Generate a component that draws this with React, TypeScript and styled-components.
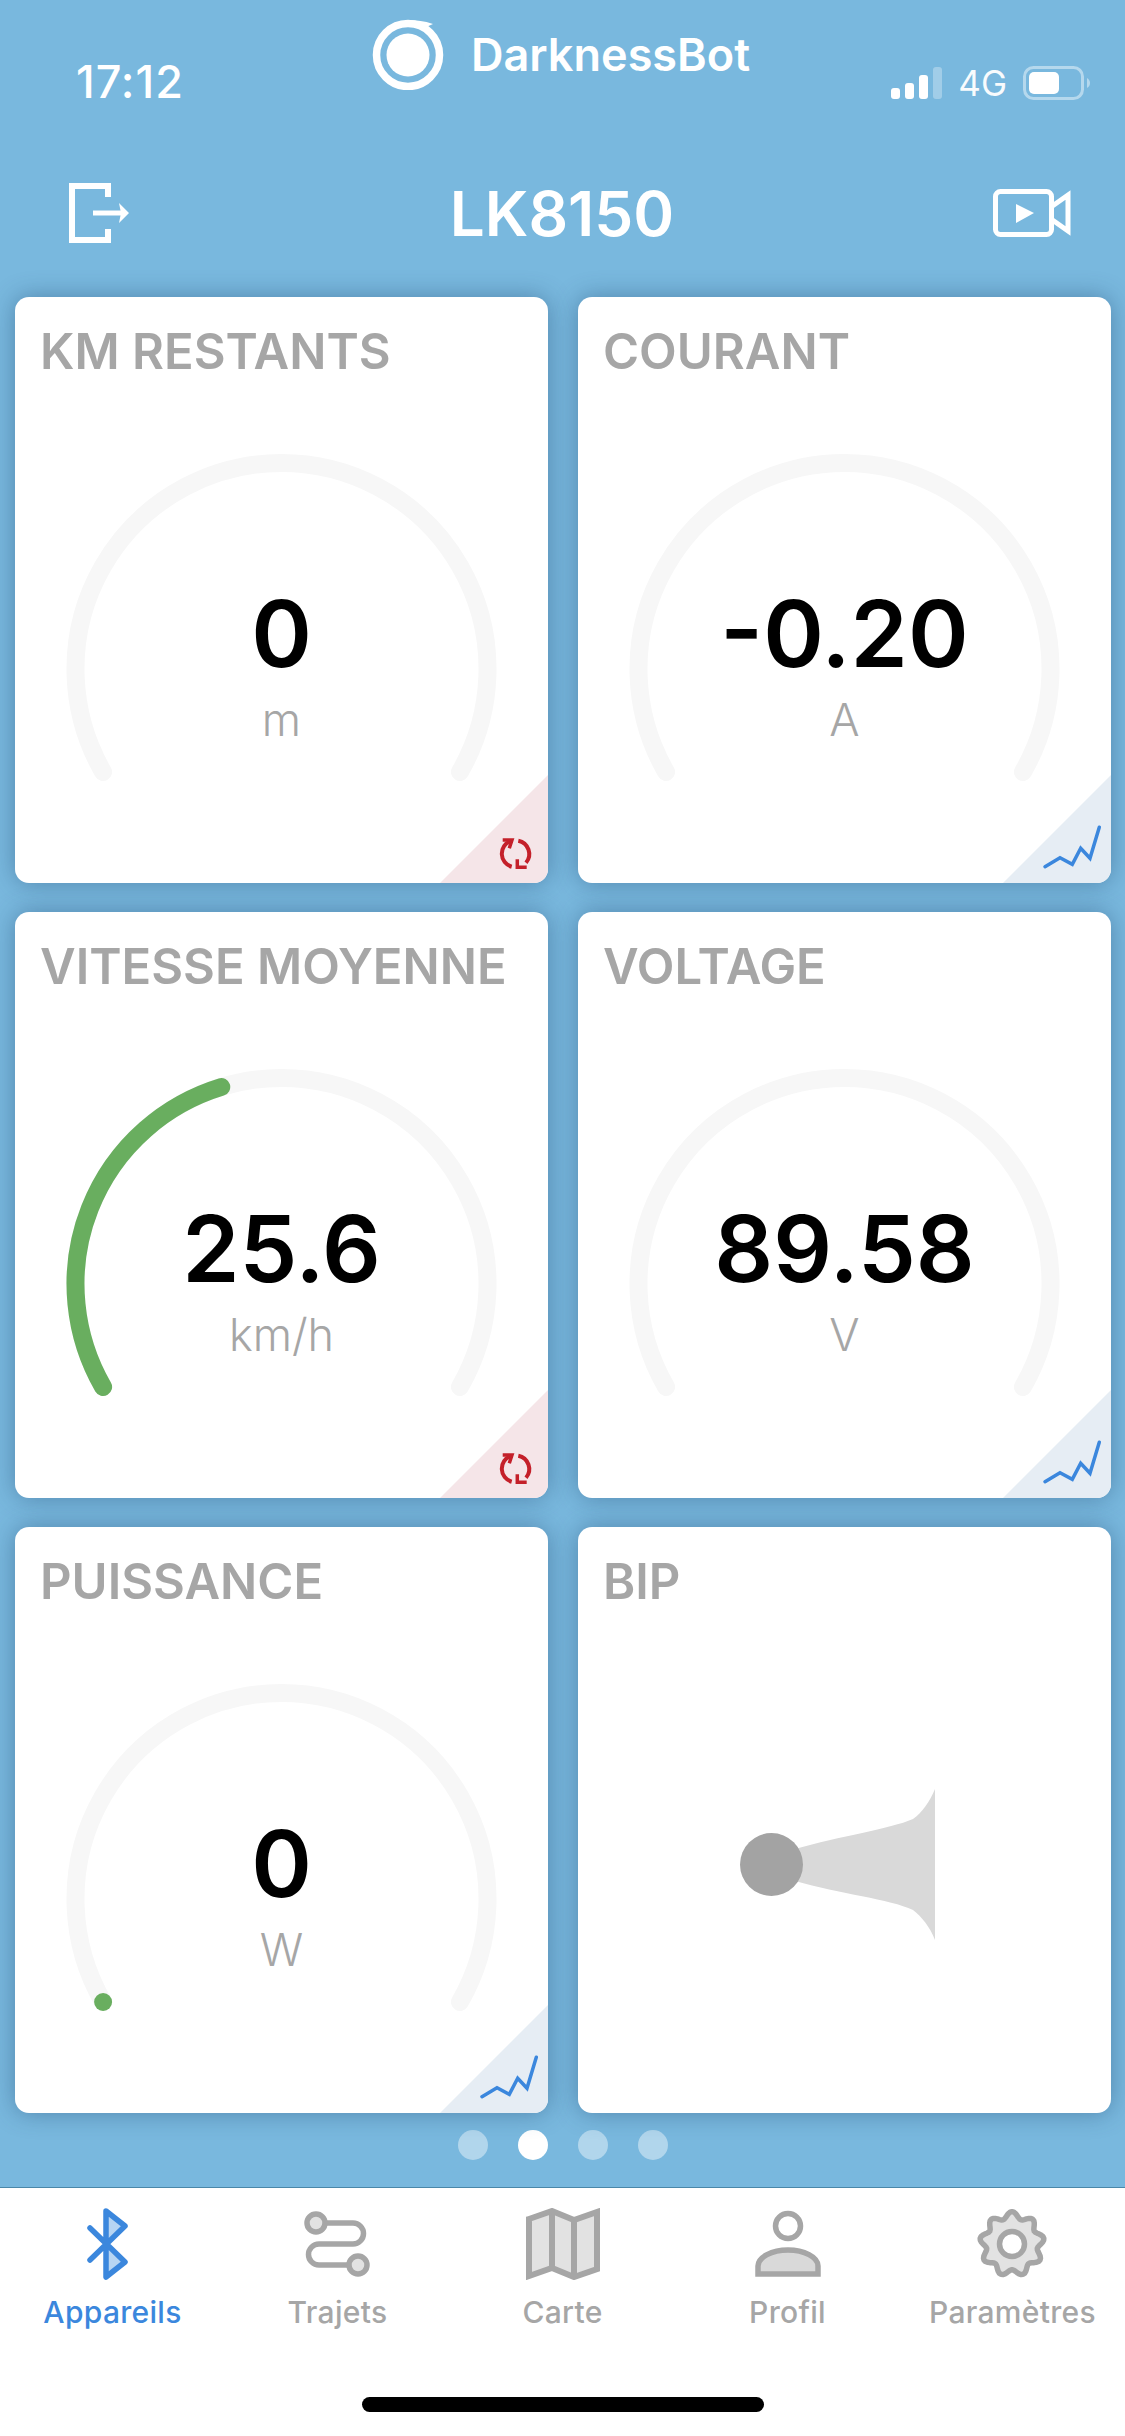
import React from 'react';
import styled, { createGlobalStyle } from 'styled-components';

const GREY = '#a6a6a6';
const BLUE = '#3b87dd';

const Global = createGlobalStyle`
  html, body {
    margin: 0;
    padding: 0;
    background: #79b8de;
    font-family: Inter, "Liberation Sans", sans-serif;
  }
`;

const Screen = styled.div`
  width: 1125px;
  height: 2436px;
  display: flex;
  flex-direction: column;
  background: #79b8de;
  overflow: hidden;
`;

const StatusBar = styled.div`
  height: 102px;
  display: grid;
  grid-template-columns: 1fr auto 1fr;
  color: white;
`;

const Time = styled.div`
  font-size: 45px;
  font-weight: 500;
  letter-spacing: 1px;
  padding: 60px 0 0 76px;
  line-height: 44px;
`;

const Brand = styled.div`
  display: flex;
  align-items: center;
  gap: 27px;
  height: 108px;
  margin-right: 3px;
  font-size: 45px;
  font-weight: 600;
`;

const StatusRight = styled.div`
  display: flex;
  justify-content: flex-end;
  align-items: center;
  gap: 16px;
  padding: 61px 33px 0 0;
  height: 44px;
`;

const Network = styled.span`
  font-size: 35px;
  font-weight: 400;
  opacity: 0.95;
`;

const Header = styled.div`
  height: 178px;
  padding: 44px 54px 0 69px;
  display: flex;
  align-items: center;
  justify-content: space-between;
  color: white;
  box-sizing: border-box;
`;

const HeaderTitle = styled.div`
  font-size: 62px;
  font-weight: 600;
`;

const Grid = styled.div`
  display: grid;
  grid-template-columns: 533px 533px;
  grid-auto-rows: 586px;
  gap: 29px 30px;
  padding: 17px 14px 0 15px;
`;

const Card = styled.div`
  position: relative;
  background: white;
  border-radius: 14px;
  box-shadow: 0 0 24px rgba(30, 70, 110, 0.45);
  overflow: hidden;
`;

const CardTitle = styled.div`
  padding: 28px 0 0 25px;
  font-size: 49px;
  line-height: 54px;
  font-weight: 600;
  color: ${GREY};
  white-space: nowrap;
`;

const GaugeBody = styled.div`
  position: relative;
  height: 504px;
`;

const GaugeSvg = styled.svg`
  display: block;
`;

const Reading = styled.div`
  position: absolute;
  left: 0;
  right: 0;
  top: 205px;
  text-align: center;
`;

const Value = styled.div`
  font-size: 92px;
  line-height: 100px;
  font-weight: 600;
  color: black;
`;

const Unit = styled.div`
  font-size: 45px;
  line-height: 56px;
  font-weight: 300;
  color: ${GREY};
  margin-top: 8px;
`;

const Corner = styled.div<{ $tint: string }>`
  position: absolute;
  right: 0;
  bottom: 0;
  width: 108px;
  height: 108px;
  background: ${p => p.$tint};
  clip-path: polygon(100% 0, 100% 100%, 0 100%);
`;

const CornerIcon = styled.svg`
  position: absolute;
  right: 0;
  bottom: 0;
`;

const HornArea = styled.div`
  padding: 180px 14px 0 0;
  display: flex;
  justify-content: center;
  align-items: flex-start;
`;

const Dots = styled.div`
  height: 64px;
  margin: 0 0 10px 1px;
  display: flex;
  justify-content: center;
  align-items: center;
  gap: 30px;
`;

const Dot = styled.div<{ $active?: boolean }>`
  width: 30px;
  height: 30px;
  border-radius: 50%;
  background: ${p => (p.$active ? '#ffffff' : 'rgba(255,255,255,0.42)')};
`;

const TabBar = styled.div`
  flex: 1;
  background: white;
  border-top: 1px solid #4b87a8;
  position: relative;
  display: grid;
  grid-template-columns: repeat(5, 225px);
  align-items: start;
`;

const Tab = styled.div<{ $active?: boolean }>`
  display: flex;
  flex-direction: column;
  align-items: center;
  padding-top: 20px;
  color: ${p => (p.$active ? BLUE : GREY)};
`;

const TabIcon = styled.svg`
  display: block;
`;

const TabLabel = styled.div`
  font-size: 30px;
  line-height: 34px;
  font-weight: 500;
  letter-spacing: 0.3px;
  margin-top: 15px;
`;

const HomeBar = styled.div`
  position: absolute;
  left: 362px;
  top: 209px;
  width: 402px;
  height: 15px;
  border-radius: 8px;
  background: black;
`;

// angle in degrees, 0 = top of the dial, clockwise
const polar = (deg: number, r = 206) => {
  const a = (deg * Math.PI) / 180;
  return [266.5 + r * Math.sin(a), 290 - r * Math.cos(a)];
};

const arc = (from: number, to: number) => {
  const [x1, y1] = polar(from);
  const [x2, y2] = polar(to);
  return `M${x1} ${y1} A206 206 0 ${to - from > 180 ? 1 : 0} 1 ${x2} ${y2}`;
};

const START = -120;
const END = 120;

const Gauge = ({ value, unit, to }: { value: string; unit: string; to?: number }) => (
  <GaugeBody>
    <GaugeSvg width="533" height="504">
      <path d={arc(START, END)} fill="none" stroke="#f7f7f7" strokeWidth="18" strokeLinecap="round" />
      {to !== undefined && to !== START && (
        <path d={arc(START, to)} fill="none" stroke="#69ae5f" strokeWidth="18" strokeLinecap="round" />
      )}
      {to === START && <circle cx={polar(START)[0]} cy={polar(START)[1]} r="9" fill="#69ae5f" />}
    </GaugeSvg>
    <Reading>
      <Value>{value}</Value>
      <Unit>{unit}</Unit>
    </Reading>
  </GaugeBody>
);

const RefreshBadge = () => (
  <>
    <Corner $tint="#f5e5e8" />
    <CornerIcon width="60" height="60" viewBox="0 0 60 60" fill="none" stroke="#c4202a" strokeWidth="4">
      <path d="M22.7 18 A13.5 13.5 0 0 0 23.7 43.7" />
      <path d="M14.7 17 H24 L21.3 25.3" strokeWidth="3.5" />
      <path d="M30.3 17.7 A13.5 13.5 0 0 1 38 39.7" />
      <path d="M29.3 36.3 V44.3 H38.7" strokeWidth="3.5" />
    </CornerIcon>
  </>
);

const ChartBadge = () => (
  <>
    <Corner $tint="#e6edf4" />
    <CornerIcon width="80" height="70" viewBox="0 0 80 70" fill="none">
      <path
        d="M14 53.7 L29 44.7 L41.3 51.3 L49.7 35.3 L59 45.3 L68.3 14.3"
        stroke={BLUE}
        strokeWidth="3.5"
        strokeLinecap="round"
      />
    </CornerIcon>
  </>
);

const gearPath = () => {
  const pts: string[] = [];
  const n = 108;
  for (let i = 0; i <= n; i++) {
    const a = (i / n) * Math.PI * 2;
    const r = 29 + 3.3 * Math.cos(a * 9);
    pts.push(`${35 + r * Math.sin(a)} ${36 - r * Math.cos(a)}`);
  }
  return `M${pts.join(' L')}Z`;
};

const tabs = [
  {
    label: 'Appareils',
    active: true,
    w: 56,
    icon: (
      <g strokeLinejoin="round">
        <path d="M21 5 L40 18 L21 36 L40 54 L21 67 Z" fill="#b7d5f3" stroke="none" />
        <path d="M5 20 L40 54 L21 69 L21 3 L40 18 L5 52" fill="none" stroke={BLUE} strokeWidth="5.5" strokeLinecap="round" />
      </g>
    ),
  },
  {
    label: 'Trajets',
    w: 68,
    icon: (
      <g fill="none" stroke={GREY} strokeWidth="5.5">
        <path d="M22 15 H49 A10.5 10.5 0 0 1 49 36 H15 A10.5 10.5 0 0 0 15 57 H45" />
        <circle cx="12" cy="15" r="9" fill="#e2e2e2" />
        <circle cx="54" cy="57" r="9" fill="#e2e2e2" />
      </g>
    ),
  },
  {
    label: 'Carte',
    w: 74,
    icon: (
      <g stroke={GREY} strokeWidth="6" fill="#e2e2e2" strokeLinejoin="miter">
        <path d="M3 11 L26 3 L48 12 L71 4 L71 61 L48 69 L26 60 L3 68 Z" />
        <path d="M26 3 V60 M48 12 V69" fill="none" />
      </g>
    ),
  },
  {
    label: 'Profil',
    w: 68,
    icon: (
      <g stroke={GREY} strokeWidth="5.5">
        <circle cx="34" cy="18" r="12.5" fill="white" />
        <path d="M4 66 V58 C4 49 18 42 34 42 C50 42 64 49 64 58 V66 Z" fill="#d9d9d9" />
      </g>
    ),
  },
  {
    label: 'Paramètres',
    w: 72,
    icon: (
      <g stroke={GREY} strokeWidth="5.5">
        <path d={gearPath()} fill="#e2e2e2" strokeLinejoin="round" />
        <circle cx="35" cy="36" r="12.5" fill="white" />
      </g>
    ),
  },
];

export default function App() {
  return (
    <Screen>
      <Global />
      <StatusBar>
        <Time>17:12</Time>
        <Brand>
          <svg width="72" height="72" viewBox="0 0 72 72" fill="none">
            <circle cx="36" cy="37" r="31.5" stroke="white" strokeWidth="7.5" />
            <path d="M36 2 C45 2 52 3 61 6 L52 10 Z" fill="white" />
            <circle cx="36" cy="37" r="21.5" fill="white" />
          </svg>
          DarknessBot
        </Brand>
        <StatusRight>
          <svg width="51" height="32" viewBox="0 0 51 32" fill="white">
            <rect x="0" y="21" width="9" height="11" rx="3" />
            <rect x="14" y="16" width="9" height="16" rx="3" />
            <rect x="28" y="8" width="9" height="24" rx="3" />
            <rect x="42" y="0" width="9" height="32" rx="3" opacity="0.3" />
          </svg>
          <Network>4G</Network>
          <svg width="69" height="34" viewBox="0 0 69 34" fill="none">
            <rect x="1.5" y="1.5" width="58" height="31" rx="9" stroke="white" strokeOpacity="0.45" strokeWidth="3" />
            <rect x="6" y="6" width="30" height="22" rx="5" fill="white" />
            <path d="M64 12 C68 14 68 20 64 22 Z" fill="white" fillOpacity="0.45" />
          </svg>
        </StatusRight>
      </StatusBar>

      <Header>
        <svg width="62" height="60" viewBox="0 0 62 60" fill="none" stroke="white" strokeWidth="6">
          <path d="M39 14 V3 H3 V57 H39 V46" />
          <path d="M24 30 H52" strokeWidth="5" />
          <path d="M50 20 L60 30 L50 40 L52 30 Z" fill="white" stroke="none" />
        </svg>
        <HeaderTitle>LK8150</HeaderTitle>
        <svg width="78" height="48" viewBox="0 0 78 48" fill="none" stroke="white" strokeWidth="5">
          <rect x="2.5" y="2.5" width="56" height="43" rx="5" />
          <path d="M58 18 L75 6 V42 L58 30" />
          <path d="M23 15 L41 24 L23 34 Z" fill="white" stroke="none" />
        </svg>
      </Header>

      <Grid>
        <Card>
          <CardTitle>KM RESTANTS</CardTitle>
          <Gauge value="0" unit="m" />
          <RefreshBadge />
        </Card>
        <Card>
          <CardTitle>COURANT</CardTitle>
          <Gauge value="-0.20" unit="A" />
          <ChartBadge />
        </Card>
        <Card>
          <CardTitle>VITESSE MOYENNE</CardTitle>
          <Gauge value="25.6" unit="km/h" to={-17} />
          <RefreshBadge />
        </Card>
        <Card>
          <CardTitle>VOLTAGE</CardTitle>
          <Gauge value="89.58" unit="V" />
          <ChartBadge />
        </Card>
        <Card>
          <CardTitle>PUISSANCE</CardTitle>
          <Gauge value="0" unit="W" to={START} />
          <ChartBadge />
        </Card>
        <Card>
          <CardTitle>BIP</CardTitle>
          <HornArea>
            <svg width="195" height="151" viewBox="0 0 195 151">
              <path
                d="M55 60 C100 47 150 40 173 30 C182 24 190 12 195 0 V151 C190 138 182 128 173 121 C150 110 100 105 55 92 Z"
                fill="#d9d9d9"
              />
              <circle cx="31.5" cy="75.5" r="31.5" fill="#a3a3a3" />
            </svg>
          </HornArea>
        </Card>
      </Grid>

      <Dots>
        <Dot />
        <Dot $active />
        <Dot />
        <Dot />
      </Dots>

      <TabBar>
        {tabs.map(t => (
          <Tab key={t.label} $active={t.active}>
            <TabIcon width={t.w} height="72" viewBox={`0 0 ${t.w} 72`}>
              {t.icon}
            </TabIcon>
            <TabLabel>{t.label}</TabLabel>
          </Tab>
        ))}
        <HomeBar />
      </TabBar>
    </Screen>
  );
}
